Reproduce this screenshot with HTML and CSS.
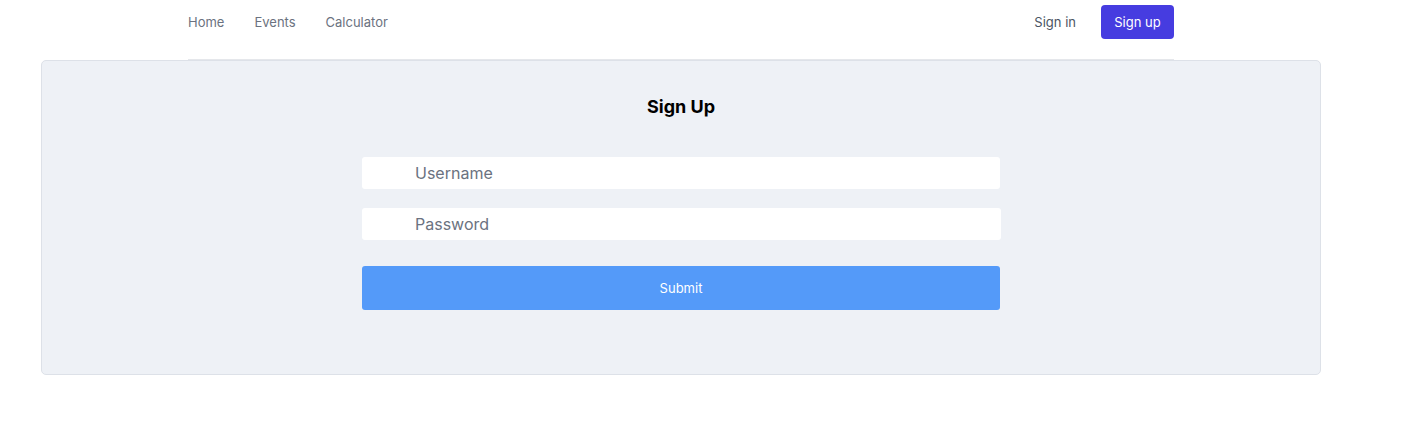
FILE: index.html
```html
<!DOCTYPE html>
<html>
<head>
<meta charset="utf-8">
<link rel="stylesheet" href="styles.css">
</head>
<body>
<div class="page">
  <nav class="nav">
    <div class="nav-links">
      <a class="nav-link" href="#">Home</a>
      <a class="nav-link" href="#">Events</a>
      <a class="nav-link" href="#">Calculator</a>
    </div>
    <div class="nav-auth">
      <a class="nav-link signin" href="#">Sign in</a>
      <a class="btn-signup" href="#">Sign up</a>
    </div>
  </nav>
  <main class="card">
    <h1 class="title">Sign Up</h1>
    <form class="form">
      <input class="field" type="text" placeholder="Username">
      <input class="field field-pw" type="password" placeholder="Password">
      <button class="submit" type="button">Submit</button>
    </form>
  </main>
</div>
</body>
</html>
```
FILE: styles.css
```css
* { box-sizing: border-box; }
html, body { margin: 0; padding: 0; background: #fff; }
body { font-family: Inter, "Noto Sans", sans-serif; }
.page { width: 1362px; }
.nav {
  width: 986px;
  margin: 0 auto;
  height: 60px;
  display: flex;
  align-items: flex-start;
  justify-content: space-between;
  border-bottom: 1px solid #e5e7eb;
  padding-top: 5px;
}
.nav-links { display: flex; gap: 30px; align-items: center; height: 34px; }
.nav-link {
  color: #6b7280;
  font-size: 13px;
  text-decoration: none;
  line-height: 20px;
}
.nav-auth { display: flex; align-items: center; gap: 25px; height: 34px; }
.signin { color: #4b5563; }
.btn-signup {
  display: inline-flex;
  align-items: center;
  justify-content: center;
  width: 73px;
  height: 34px;
  background: #463ce0;
  color: #fff;
  font-size: 13px;
  text-decoration: none;
  border-radius: 4px;
}
.card {
  margin: 0 41px;
  height: 315px;
  background: #eef1f6;
  border: 1px solid #dde1e8;
  border-radius: 5px;
  display: flex;
  flex-direction: column;
  align-items: center;
}
.title {
  margin: 35px 0 0;
  font-size: 18px;
  font-weight: 700;
  color: #000;
  line-height: 22px;
}
.form {
  margin-top: 39px;
  width: 638px;
  display: flex;
  flex-direction: column;
}
.field {
  height: 32px;
  border: none;
  border-radius: 3px;
  background: #fff;
  padding: 0 0 0 53px;
  font-family: Inter, "Noto Sans", sans-serif;
  font-size: 16px;
  color: #374151;
  outline: none;
}
.field::placeholder { color: #6b7280; }
.field-pw { margin-top: 19px; width: 639px; }
.submit {
  margin-top: 26px;
  height: 44px;
  border: none;
  border-radius: 3px;
  background: #549af9;
  color: #fff;
  font-family: Inter, "Noto Sans", sans-serif;
  font-size: 13px;
  cursor: pointer;
}
```
